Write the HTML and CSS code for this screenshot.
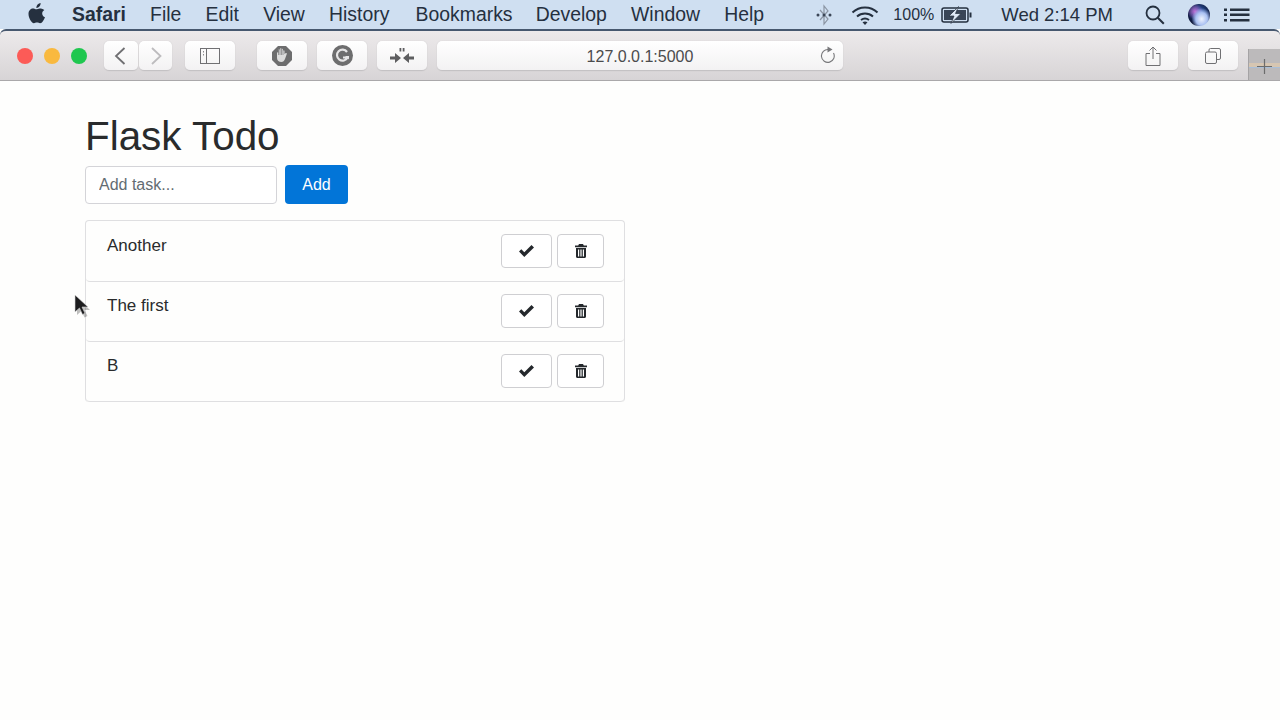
FILE: index.html
```html
<!DOCTYPE html>
<html lang="en">

<head>
    <meta charset="UTF-8">
    <title>Flask Todo</title>
    <link rel="stylesheet" href="styles.css">
</head>

<body>
    <div class="menubar">
        <svg class="apple" width="20" height="22" viewBox="0 0 20 22">
            <path fill="#25303f" d="M13.6 1c.1 1.500-.4 2.700-1.200 3.600-.8.900-1.900 1.500-3 1.400-.1-1.300.5-2.600 1.200-3.400C11.400 1.700 12.600 1.100 13.600 1zM17.300 8c-1.800 1.100-2.100 2.600-2.100 3.500 0 1.900 1.300 3.200 2.800 3.800-.5 1.500-1.200 2.800-2.100 4-.8 1.100-1.600 2-2.800 2-1.200 0-1.600-.7-3.100-.7s-2 .7-3.100.7c-1.300 0-2.100-1-3-2.200C2.700 17.300 1.500 14.500 1.500 12c0-3.600 2.300-5.500 4.600-5.500 1.300 0 2.400.8 3.200.8.800 0 2-.9 3.500-.9 1 0 2.900.3 4.500 1.600z" />
        </svg>
        <nav class="menu">
            <span class="menu-app">Safari</span>
            <span>File</span>
            <span>Edit</span>
            <span>View</span>
            <span>History</span>
            <span class="menu-wide">Bookmarks</span>
            <span>Develop</span>
            <span>Window</span>
            <span>Help</span>
        </nav>
        <div class="status">
            <svg class="st-bt" width="20" height="22" viewBox="0 0 20 22">
                <path fill="none" stroke="#8b95a3" stroke-width="1.200" d="M6 6l8 9-4 5V2l4 5-8 9" />
                <circle cx="4" cy="11" r="1.500" fill="#3b4657" />
                <circle cx="10" cy="11" r="1.500" fill="#3b4657" />
                <circle cx="16" cy="11" r="1.500" fill="#3b4657" />
            </svg>
            <svg class="st-wifi" width="28" height="20" viewBox="0 0 28 20">
                <g fill="none" stroke="#25303f" stroke-width="2">
                    <path d="M1.500 7.500C8.500 .8 19.500 .8 26.500 7.500" />
                    <path d="M6 11.500c4.500-4 11.500-4 16 0" />
                    <path d="M10 15c2.500-1.800 5.500-1.800 8 0" />
                </g>
                <path fill="#25303f" d="M11.500 17.200c1.500-1 3.500-1 5 0L14 20z" />
            </svg>
            <span class="st-pct">100%</span>
            <svg class="st-batt" width="31" height="18" viewBox="0 0 31 18">
                <rect x="1" y="2" width="26" height="14" rx="2" fill="none" stroke="#25303f" stroke-width="1.500" />
                <rect x="28.500" y="6.500" width="2" height="5" fill="#25303f" />
                <rect x="3" y="4" width="22" height="10" fill="#3a4657" />
                <path fill="#dfe9f5" stroke="#25303f" stroke-width=".7" d="M17.500 .5L8 10h5l-3 7.500L20 7.500h-5.500z" />
            </svg>
            <span class="st-clock">Wed 2:14 PM</span>
            <svg class="st-search" width="22" height="22" viewBox="0 0 22 22">
                <circle cx="9" cy="9" r="6.500" fill="none" stroke="#25303f" stroke-width="1.800" />
                <path stroke="#25303f" stroke-width="2" d="M13.800 13.800l6 6" />
            </svg>
            <span class="st-siri"></span>
            <svg class="st-list" width="26" height="14" viewBox="0 0 26 14">
                <g fill="#25303f">
                    <rect x="0" y="0.500" width="3" height="2.500" />
                    <rect x="0" y="5.500" width="3" height="2.500" />
                    <rect x="0" y="11" width="3" height="2.500" />
                    <rect x="6" y="0.500" width="19.500" height="2.500" />
                    <rect x="6" y="5.500" width="19.500" height="2.500" />
                    <rect x="6" y="11" width="19.500" height="2.500" />
                </g>
            </svg>
        </div>
    </div>

    <div class="toolbar">
        <div class="lights">
            <span class="light red"></span>
            <span class="light yellow"></span>
            <span class="light green"></span>
        </div>
        <div class="nav-pair">
            <div class="tbtn back">
                <svg width="14" height="20" viewBox="0 0 14 20"><path fill="none" stroke="#6f6f72" stroke-width="1.800" d="M10.500 2L2 10l8.500 8" /></svg>
            </div>
            <div class="tbtn forward">
                <svg width="14" height="20" viewBox="0 0 14 20"><path fill="none" stroke="#bdbcbe" stroke-width="1.800" d="M3 2l8.500 8L3 18" /></svg>
            </div>
        </div>
        <div class="tbtn wide sidebar">
            <svg width="20" height="16" viewBox="0 0 20 16">
                <rect x=".5" y=".5" width="19" height="15" fill="none" stroke="#707073" />
                <path stroke="#707073" d="M6.500 .5v15" />
                <path stroke="#8a8a8d" stroke-dasharray="1.500 1.500" d="M3.500 3v6" />
            </svg>
        </div>
        <div class="tbtn wide ublock">
            <svg width="20" height="20" viewBox="0 0 20 20">
                <path fill="#6d6d6e" d="M6 0h8l6 6v8l-6 6H6l-6-6V6z" />
                <path fill="#dcdcdc" d="M5 7c0-1 1.500-1 1.500 0V4c0-1 1.500-1 1.500 0V3c0-1 1.500-1 1.500 0v.5c0-1 1.500-1 1.500 0V5c0-1 1.500-1 1.500 0v3l1-.8c.8-.6 1.700.2 1.200 1L13 13c-.8 1.800-1.800 3-3.500 3C7 16 5 14.500 5 12z" />
                <path stroke="#6d6d6e" stroke-width=".6" d="M6.500 4v5M8 3v6M9.500 3v6M11 3.500V9" />
            </svg>
        </div>
        <div class="tbtn wide grammarly">
            <svg width="21" height="21" viewBox="0 0 21 21">
                <circle cx="10.500" cy="10.500" r="10.500" fill="#6d6d6e" />
                <path fill="none" stroke="#e6e5e6" stroke-width="2.200" d="M15 7a5.500 5.500 0 1 0 .5 5.500h-4.500" />
                <path fill="#e6e5e6" d="M13 11h4v3.500z" />
            </svg>
        </div>
        <div class="tbtn wide arrows">
            <svg width="24" height="16" viewBox="0 0 24 16">
                <g fill="#5e5e60">
                    <path d="M0 8.500h5V5l6 5-6 5v-3.500H0z" />
                    <path d="M24 8.500h-5V5l-6 5 6 5v-3.500h5z" />
                    <rect x="9.500" y="0" width="1.800" height="3.500" />
                    <rect x="12.700" y="0" width="1.800" height="3.500" />
                </g>
            </svg>
        </div>
        <div class="urlbar">
            <span class="url-text">127.0.0.1:5000</span>
            <svg class="reload" width="16" height="18" viewBox="0 0 16 18">
                <path fill="none" stroke="#77777a" stroke-width="1.100" d="M9.500 3.600A6.400 6.400 0 1 0 14.500 7" />
                <path fill="#77777a" d="M8.500 .5l5 3-5 3z" />
            </svg>
        </div>
        <div class="toolbar-right">
            <div class="tbtn wide">
                <svg width="16" height="20" viewBox="0 0 16 20">
                    <path fill="none" stroke="#707073" stroke-width="1" d="M5 7.500H1v12h14v-12h-4M8 13V1M4.500 4.500L8 1l3.500 3.500" />
                </svg>
            </div>
            <div class="tbtn wide">
                <svg width="16" height="16" viewBox="0 0 16 16">
                    <rect x=".5" y="4" width="11" height="11.500" rx="1.500" fill="none" stroke="#707073" />
                    <path fill="none" stroke="#707073" d="M4 4V2a1.500 1.500 0 0 1 1.500-1.500h8.500A1.500 1.500 0 0 1 15.500 2v8a1.500 1.500 0 0 1-1.500 1.500h-2.500" />
                </svg>
            </div>
        </div>
        <div class="newtab">
            <svg width="15" height="15" viewBox="0 0 15 15"><path stroke="#6c6c6c" stroke-width="1.200" d="M7.500 0v15M0 7.500h15" /></svg>
        </div>
    </div>

    <main class="page">
        <h1>Flask Todo</h1>
        <form class="add-form">
            <input class="add-input" type="text" placeholder="Add task...">
            <button class="add-btn" type="button">Add</button>
        </form>
        <ul class="tasks">
            <li class="task">
                <span class="task-name">Another</span>
                <div class="task-actions">
                    <button class="act act-done" type="button">
                        <svg width="15" height="12" viewBox="0 0 15 12"><path fill="#24282c" d="M0 6.500l2.300-2.300 3 3L12.500 0 15 2.400 5.300 12z" /></svg>
                    </button>
                    <button class="act act-del" type="button">
                        <svg width="12" height="14" viewBox="0 0 12 14"><path fill="#24282c" d="M4 0h4l.8 1.500H12v1.700H0V1.500h3.200zM1 4h10v8.500c0 .9-.6 1.500-1.500 1.500h-7C1.600 14 1 13.400 1 12.500zm2 1.500V12.500h1.200V5.500zm2.400 0V12.500h1.200V5.500zm2.400 0V12.500H9V5.500z" /></svg>
                    </button>
                </div>
            </li>
            <li class="task">
                <span class="task-name">The first</span>
                <div class="task-actions">
                    <button class="act act-done" type="button">
                        <svg width="15" height="12" viewBox="0 0 15 12"><path fill="#24282c" d="M0 6.500l2.300-2.300 3 3L12.500 0 15 2.400 5.300 12z" /></svg>
                    </button>
                    <button class="act act-del" type="button">
                        <svg width="12" height="14" viewBox="0 0 12 14"><path fill="#24282c" d="M4 0h4l.8 1.500H12v1.700H0V1.500h3.200zM1 4h10v8.500c0 .9-.6 1.500-1.500 1.500h-7C1.600 14 1 13.400 1 12.500zm2 1.500V12.500h1.200V5.500zm2.400 0V12.500h1.200V5.500zm2.400 0V12.500H9V5.500z" /></svg>
                    </button>
                </div>
            </li>
            <li class="task">
                <span class="task-name">B</span>
                <div class="task-actions">
                    <button class="act act-done" type="button">
                        <svg width="15" height="12" viewBox="0 0 15 12"><path fill="#24282c" d="M0 6.500l2.300-2.300 3 3L12.500 0 15 2.400 5.300 12z" /></svg>
                    </button>
                    <button class="act act-del" type="button">
                        <svg width="12" height="14" viewBox="0 0 12 14"><path fill="#24282c" d="M4 0h4l.8 1.500H12v1.700H0V1.500h3.200zM1 4h10v8.500c0 .9-.6 1.500-1.500 1.500h-7C1.600 14 1 13.400 1 12.500zm2 1.500V12.500h1.200V5.500zm2.400 0V12.500h1.200V5.500zm2.400 0V12.500H9V5.500z" /></svg>
                    </button>
                </div>
            </li>
        </ul>
    </main>

    <svg class="cursor" width="18" height="26" viewBox="0 0 18 26">
        <path fill="#000" opacity=".25" d="M3 3v18l4.500-4 3 6.500 3-1.500-3-6H16z" />
        <path fill="#1c1c1e" stroke="#d8d8d8" stroke-width=".6" d="M1 1v17l4.500-4 3 6.500 2.500-1.200-3-6.300h6z" />
    </svg>
</body>

</html>
```

FILE: styles.css
```css
html,
body {
    margin: 0;
    height: 100%;
}

body {
    background: #fefefd;
    font-family: "Liberation Sans", Arial, sans-serif;
    color: #292b2c;
    overflow: hidden;
    position: relative;
}

/* mac menu bar */
.menubar {
    display: flex;
    align-items: center;
    height: 29px;
    padding-left: 27px;
    background: #cfdff1;
    color: #25303f;
    font-size: 19.400px;
    white-space: nowrap;
}

.apple {
    margin-bottom: 3px;
}

.menu {
    display: flex;
    gap: 24.200px;
    margin-left: 25px;
}

.menu-app {
    font-weight: bold;
}

.menu-wide {
    margin-left: 2px;
    margin-right: -1px;
}

.status {
    display: flex;
    align-items: center;
    margin-left: auto;
}

.st-bt {
    margin-right: 17px;
}

.st-wifi {
    margin-right: 14px;
}

.st-pct {
    font-size: 16px;
    margin-right: 7px;
}

.st-batt {
    margin-right: 29px;
}

.st-clock {
    font-size: 18.500px;
    margin-right: 31px;
}

.st-search {
    margin-right: 22px;
}

.st-siri {
    width: 22px;
    height: 22px;
    border-radius: 50%;
    margin-right: 14px;
    background:
        radial-gradient(ellipse at 62% 68%, #eef3fd 0, #a9c0f2 30%, transparent 52%),
        radial-gradient(circle at 32% 34%, #c06fd6 0, transparent 38%),
        radial-gradient(circle at 50% 40%, #2f68c4 0, #101c44 62%, #0b1020 100%);
}

.st-list {
    margin-right: 30px;
}

/* safari toolbar */
.toolbar {
    display: flex;
    align-items: flex-start;
    box-sizing: border-box;
    height: 52px;
    padding-top: 10px;
    padding-left: 17px;
    border-top: 2px solid #47586f;
    border-bottom: 1px solid #aaa8aa;
    border-radius: 6px 6px 0 0;
    background: linear-gradient(to bottom, #edeaeb, #d7d4d6);
}

.lights {
    display: flex;
    gap: 11px;
    margin-top: 7px;
    margin-right: 17px;
}

.light {
    width: 16px;
    height: 16px;
    border-radius: 50%;
}

.red {
    background: #fc5b57;
}

.yellow {
    background: #f9b93f;
}

.green {
    background: #1fc74f;
}

.tbtn {
    display: flex;
    align-items: center;
    justify-content: center;
    box-sizing: border-box;
    height: 30px;
    background: linear-gradient(to bottom, #ffffff, #f3f2f3);
    border-bottom: 1px solid #c4c2c4;
    border-radius: 5px;
    box-shadow: 0 0 1px #bbb9bb;
}

.nav-pair {
    display: flex;
    gap: 1px;
    margin-right: 13px;
}

.back {
    width: 34px;
}

.forward {
    width: 33px;
}

.wide {
    width: 50px;
}

.sidebar {
    margin-right: 22px;
}

.ublock,
.grammarly,
.arrows {
    margin-right: 10px;
}

.urlbar {
    position: relative;
    display: flex;
    align-items: center;
    justify-content: center;
    box-sizing: border-box;
    width: 406px;
    height: 30px;
    background: linear-gradient(to bottom, #ffffff, #f3f2f3);
    border-bottom: 1px solid #c4c2c4;
    border-radius: 5px;
    box-shadow: 0 0 1px #bbb9bb;
}

.url-text {
    margin-top: 2px;
    font-size: 16px;
    color: #4b4b4d;
}

.reload {
    position: absolute;
    right: 8px;
    top: 5px;
}

.toolbar-right {
    display: flex;
    gap: 10px;
    margin-left: auto;
    margin-right: 10px;
}

.newtab {
    display: flex;
    align-items: center;
    justify-content: center;
    align-self: flex-end;
    box-sizing: border-box;
    width: 32px;
    height: 31px;
    padding-top: 3px;
    background: linear-gradient(to bottom, #bcbabb 0, #bcbabb 44%, #d6c6b2 44%, #d6c6b2 57%, #a9bfd8 57%, #a9bfd8 61%, #bcbabb 61%);
    border-left: 1px solid #a5a3a5;
}

/* todo page */
.page {
    padding: 31px 0 0 85px;
}

h1 {
    margin: 0 0 5px;
    font-size: 40.400px;
    font-weight: normal;
    line-height: 48px;
}

.add-form {
    display: flex;
    align-items: flex-end;
    gap: 8px;
    margin: 0 0 16px;
}

.add-input {
    box-sizing: border-box;
    width: 192px;
    height: 38px;
    padding: 0 13px;
    border: 1px solid #d4d4d8;
    border-radius: 4px;
    background: #fff;
    font-family: inherit;
    font-size: 16px;
    color: #55595c;
}

.add-input::placeholder {
    color: #636c72;
    opacity: 1;
}

.add-btn {
    box-sizing: border-box;
    width: 63px;
    height: 39px;
    border: none;
    border-radius: 4px;
    background: #0275d8;
    color: #fff;
    font-family: inherit;
    font-size: 16px;
}

.tasks {
    box-sizing: border-box;
    width: 540px;
    margin: 0;
    padding: 0;
    list-style: none;
    border: 1px solid #dfdfe1;
    border-bottom: none;
    border-radius: 4px;
}

.task {
    display: flex;
    justify-content: space-between;
    align-items: flex-start;
    box-sizing: border-box;
    height: 60px;
    padding: 12px 20px 0 21px;
    border-bottom: 1px solid #dfdfe1;
    border-radius: 0 0 4px 4px;
}

.task:first-child {
    height: 61px;
    padding-top: 13px;
}

.task-name {
    font-size: 17px;
    line-height: 24px;
}

.task-actions {
    display: flex;
    gap: 5px;
}

.act {
    display: flex;
    align-items: center;
    justify-content: center;
    box-sizing: border-box;
    height: 34px;
    padding: 0;
    border: 1px solid #cfcfd2;
    border-radius: 4px;
    background: #fff;
}

.act-done {
    width: 51px;
}

.act-del {
    width: 47px;
}

.cursor {
    position: absolute;
    left: 74px;
    top: 294px;
}
```
